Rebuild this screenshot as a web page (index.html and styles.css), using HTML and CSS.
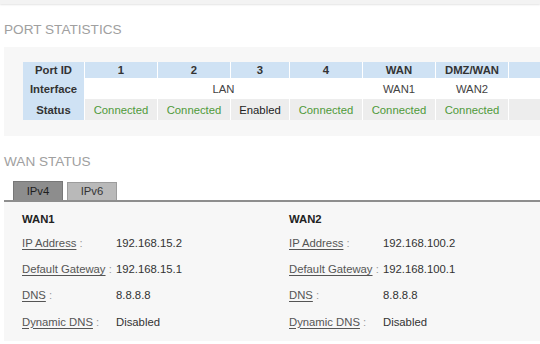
FILE: index.html
```html
<!DOCTYPE html>
<html lang="en">
<head>
    <meta charset="UTF-8">
    <meta name="viewport" content="width=device-width, initial-scale=1.0">
    <title>Router Status</title>
    <link rel="stylesheet" href="styles.css">
</head>
<body>

<div class="topbar"></div>

<h2 class="section-title">PORT STATISTICS</h2>
<div class="panel">
    <table class="ports">
        <tr class="head">
            <th class="first">Port ID</th>
            <th class="w72">1</th>
            <th class="w72">2</th>
            <th class="w58">3</th>
            <th class="w72">4</th>
            <th class="w72">WAN</th>
            <th class="w72">DMZ/WAN</th>
            <th class="w72"></th>
        </tr>
        <tr class="iface">
            <th class="first">Interface</th>
            <td colspan="4">LAN</td>
            <td>WAN1</td>
            <td>WAN2</td>
            <td></td>
        </tr>
        <tr class="status">
            <th class="first">Status</th>
            <td class="ok">Connected</td>
            <td class="ok">Connected</td>
            <td>Enabled</td>
            <td class="ok">Connected</td>
            <td class="ok">Connected</td>
            <td class="ok">Connected</td>
            <td></td>
        </tr>
    </table>
</div>

<h2 class="section-title wan-title">WAN STATUS</h2>
<div class="tabs">
    <span class="tab active">IPv4</span>
    <span class="tab">IPv6</span>
</div>
<div class="wan-panel">
    <div class="wan-col">
        <div class="wan-name">WAN1</div>
        <div class="row"><span class="label"><u>IP Address</u> :</span><span>192.168.15.2</span></div>
        <div class="row"><span class="label"><u>Default Gateway</u> :</span><span>192.168.15.1</span></div>
        <div class="row"><span class="label"><u>DNS</u> :</span><span>8.8.8.8</span></div>
        <div class="row"><span class="label"><u>Dynamic DNS</u> :</span><span>Disabled</span></div>
    </div>
    <div class="wan-col">
        <div class="wan-name">WAN2</div>
        <div class="row"><span class="label"><u>IP Address</u> :</span><span>192.168.100.2</span></div>
        <div class="row"><span class="label"><u>Default Gateway</u> :</span><span>192.168.100.1</span></div>
        <div class="row"><span class="label"><u>DNS</u> :</span><span>8.8.8.8</span></div>
        <div class="row"><span class="label"><u>Dynamic DNS</u> :</span><span>Disabled</span></div>
    </div>
</div>

</body>
</html>
```

FILE: styles.css
```css
body {
    margin: 0;
    font-family: "Liberation Sans", Arial, sans-serif;
    font-size: 11.3px;
    color: #333;
    background: #fff;
    overflow: hidden;
}
.topbar {
    height: 4px;
    background: #f3f3f3;
    box-shadow: 0 1px 2px #e4e4e4;
}
.section-title {
    margin: 18px 0 0 4px;
    font-size: 13.6px;
    font-weight: normal;
    line-height: 16px;
    color: #a0a0a0;
}
.panel {
    box-sizing: border-box;
    width: calc(100% - 4px);
    overflow: hidden;
    margin: 9px 0 0 4px;
    padding: 15px 0 16px 19px;
    background: #f7f7f7;
}
.ports {
    border-collapse: collapse;
    table-layout: fixed;
    width: 551px;
    text-align: center;
}
.ports th,
.ports td {
    padding: 0;
    border-right: 1px solid #fff;
    white-space: nowrap;
}
.ports .head th {
    height: 16px;
    background: #cfe2f4;
    font-weight: bold;
    color: #333;
}
.ports .first {
    width: 61px;
    background: #cfe2f4;
    font-weight: bold;
    color: #333;
}
.w72 { width: 72px; }
.w58 { width: 58px; }
.ports .iface td {
    height: 21px;
    background: #fff;
    color: #444;
}
.ports .status td {
    height: 21px;
    background: #ededed;
    color: #222;
}
.ports .status .ok {
    color: #4f9a3a;
}
.wan-title {
    margin-top: 18px;
}
.tabs {
    display: flex;
    align-items: flex-end;
    gap: 4px;
    margin: 10px 0 0 4px;
    padding-left: 9px;
    height: 20px;
    border-bottom: 2px solid #8e8e8e;
}
.tab {
    width: 48px;
    height: 17px;
    line-height: 17px;
    text-align: center;
    background: #b9b9b9;
    border: 1px solid #9c9c9c;
    border-bottom: none;
    color: #333;
}
.tab.active {
    height: 18px;
    line-height: 18px;
    background: #8d8d8d;
    border-color: #777;
    color: #1e1e1e;
}
.wan-panel {
    display: grid;
    grid-template-columns: 267px 267px;
    margin-left: 4px;
    padding: 10px 0 6px 18px;
    background: #f7f7f7;
}
.wan-name {
    font-weight: bold;
    color: #222;
    line-height: 14px;
    margin-bottom: 4px;
}
.row {
    display: flex;
    height: 26.2px;
    align-items: center;
    color: #333;
}
.label {
    width: 94px;
    color: #999;
    flex: none;
}
.label u {
    color: #555;
    text-underline-offset: 2px;
}
```
